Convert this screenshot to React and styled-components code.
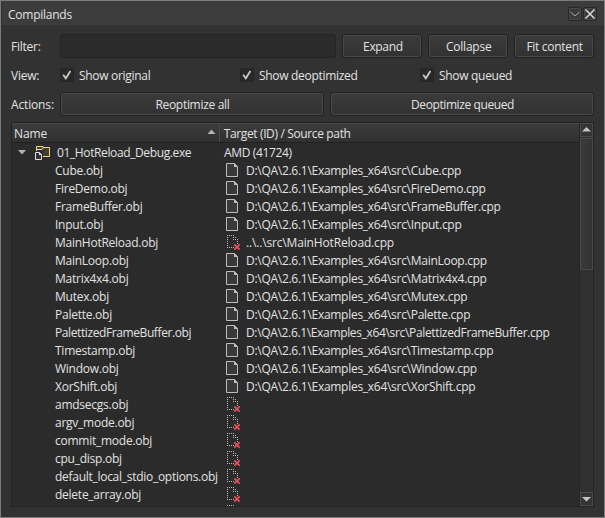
import React from 'react';
import styled, { createGlobalStyle, css } from 'styled-components';

const Global = createGlobalStyle`
  * { box-sizing: border-box; }
  body { margin: 0; background: #323232; }
`;

const Window = styled.div`
  width: 605px;
  height: 518px;
  display: flex;
  flex-direction: column;
  background: #323232;
  border: 1px solid #7b7d7b;
  color: #e2e2e2;
  font: 12px/18px "Open Sans", "Noto Sans", sans-serif;
  white-space: pre;
  overflow: hidden;
  cursor: default;
`;

const TitleBar = styled.header`
  height: 24px;
  margin-left: 1px;
  padding: 1px 7px 0 6px;
  display: flex;
  align-items: center;
  background: #3c3c3c;
`;

const Text = styled.span`
  letter-spacing: ${(p) => p.$ls ?? -0.25}px;
`;

const TitleText = styled(Text)`
  flex: 1;
  padding-top: 2px;
`;

const TitleButton = styled.button`
  width: 14px;
  height: 14px;
  margin-left: 1px;
  padding: 0;
  display: flex;
  border: 1px solid #272727;
  border-radius: 2px;
  background: #3a3a3a;
  box-shadow: inset 0 0 0 1px #484848;
`;

const Form = styled.section`
  display: flex;
  flex-direction: column;
  padding: 9px 10px 0;
`;

const FormRow = styled.div`
  display: flex;
  align-items: center;
  height: ${(p) => p.$h}px;
`;

const Label = styled(Text)`
  width: 49px;
  flex: none;
  padding-top: 2px;
`;

const FilterInput = styled.input`
  width: 277px;
  height: 24px;
  border: 1px solid #242424;
  border-radius: 3px;
  background: #2b2b2b;
  color: inherit;
`;

const Button = styled.button`
  width: ${(p) => p.$w}px;
  height: 24px;
  margin-left: ${(p) => p.$gap ?? 6}px;
  padding: 2px 0 0 1px;
  border: 1px solid #202020;
  border-radius: 3px;
  background: linear-gradient(#3b3b3b, #323232);
  box-shadow: inset 0 0 0 1px #4a4a4a;
  color: inherit;
  font: inherit;
  text-align: center;
`;

const Check = styled.label`
  width: 180px;
  flex: none;
  display: flex;
  align-items: center;
  gap: 5px;
`;

const CheckText = styled(Text)`
  padding-top: 2px;
`;

const CheckBox = styled.span`
  width: 14px;
  height: 14px;
  display: flex;
  background: #292929;
  border: 1px solid #262626;
`;

const Tree = styled.section`
  width: 583px;
  height: 385px;
  margin: 6px 0 0 10px;
  display: flex;
  border: 1px solid #232323;
  background: #2b2b2b;
`;

const Table = styled.div`
  flex: 1;
  display: flex;
  flex-direction: column;
  overflow: hidden;
`;

const HeaderRow = styled.div`
  height: 20px;
  flex: none;
  display: flex;
  background: linear-gradient(#3b3b3b, #303030);
  border-top: 1px solid #464646;
  border-bottom: 1px solid #212121;
`;

const HeaderCell = styled.div`
  width: ${(p) => p.$w}px;
  padding: 1px 3px 0 ${(p) => p.$pad}px;
  display: flex;
  justify-content: space-between;
  ${(p) => p.$rule && css`border-right: 1px solid #4a4a4a;`}
`;

const Rows = styled.div`
  flex: 1;
  padding-top: 1px;
  overflow: hidden;
`;

const Row = styled.div`
  height: 18px;
  display: flex;
`;

const NameCell = styled.div`
  width: 212px;
  flex: none;
  display: flex;
  padding-left: ${(p) => (p.$root ? 0 : 43)}px;
`;

const RootName = styled(Text)`
  padding-left: 7px;
`;

const PathCell = styled.div`
  display: flex;
  gap: 6px;
  padding-left: ${(p) => (p.$root ? 0 : 2)}px;
`;

const ScrollBar = styled.div`
  width: 14px;
  display: flex;
  flex-direction: column;
  background: #303030;
  border-left: 1px solid #252525;
`;

const ScrollButton = styled.div`
  height: 14px;
  display: flex;
  border: 1px solid #4b4b4b;
  background: #343434;
  ${(p) => p.$last && css`margin-top: auto;`}
`;

const ScrollThumb = styled.div`
  height: 132px;
  margin-top: 1px;
  border: 1px solid #4b4b4b;
  background: linear-gradient(90deg, #3a3a3a, #333);
`;

const Svg = styled.svg`
  display: block;
  flex: none;
  overflow: visible;
`;

const CheckMark = () => (
  <Svg width="12" height="12" viewBox="0 0 12 12">
    <path d="M2.2 5.8 L4.8 9.3 L9.4 2" fill="none" stroke="#c8c8c8" strokeWidth="1.8" />
  </Svg>
);

const FileIcon = () => (
  <Svg width="14" height="18" viewBox="0 0 14 18">
    <path d="M.5 1.5H8.5L11.5 4.5V14.5H.5Z" fill="#393939" stroke="#bdbdbd" />
    <path d="M8 1V5H12Z" fill="#bdbdbd" />
  </Svg>
);

const MissingIcon = () => (
  <Svg width="14" height="18" viewBox="0 0 14 18" shapeRendering="crispEdges">
    <path d="M1 1.5H8M1 13.5H8" stroke="#b8b8b8" strokeDasharray="1 1" />
    <path d="M1.5 1V14" stroke="#b8b8b8" strokeDasharray="1 1" />
    <path d="M7 3h1v1h-1zM9 3h1v1h-1zM7 5h1v1h-1zM9 5h1v1h-1zM11 5h1v1h-1zM11 7h1v1h-1zM11 9h1v1h-1z" fill="#b8b8b8" />
    <path d="M8.3 10.3L13.7 15.7M13.7 10.3L8.3 15.7" stroke="#e8505a" strokeWidth="1.8" shapeRendering="auto" />
  </Svg>
);

const ProjectIcon = () => (
  <Svg width="15" height="18" viewBox="0 0 15 18">
    <path d="M1.5 6.5V2.5H7.5V3.5H14.5V12.5H8V5.5H1.5" fill="#403d33" stroke="none" />
    <path d="M1.5 7V2.5H8V3.5H14.5V12.5H8M1.5 5.5H7L8.5 3.5" fill="none" stroke="#f2d58c" />
    <path d="M.5 8.5H4.5L6.5 10.5V15.5H.5Z" fill="#333" stroke="#dedede" />
    <path d="M4 8V11H7Z" fill="#dedede" />
  </Svg>
);

const Expander = () => (
  <Svg width="23" height="18" viewBox="0 0 23 18">
    <path d="M6 6H14L10 10.5Z" fill="#b4b4b4" />
  </Svg>
);

const SortArrow = () => (
  <Svg width="9" height="18" viewBox="0 0 9 18">
    <path d="M.5 9H8.5L4.5 4.5Z" fill="#b4b4b4" />
  </Svg>
);

const ScrollArrow = ({ down }) => (
  <Svg width="11" height="12" viewBox="0 0 11 12">
    <path d={down ? 'M1 4H10L5.5 8.5Z' : 'M1 7.5H10L5.5 3Z'} fill="#c4c4c4" />
  </Svg>
);

const columns = [
  { title: 'Name', w: 208, pad: 2, ls: -0.1 },
  { title: 'Target (ID) / Source path', w: 360, pad: 4, ls: -0.36 },
];

const src = (f) => `D:\\QA\\2.6.1\\Examples_x64\\src\\${f}.cpp`;
const rows = [
  ['Cube', src('Cube')],
  ['FireDemo', src('FireDemo')],
  ['FrameBuffer', src('FrameBuffer')],
  ['Input', src('Input')],
  ['MainHotReload', '..\\..\\src\\MainHotReload.cpp', true],
  ['MainLoop', src('MainLoop')],
  ['Matrix4x4', src('Matrix4x4')],
  ['Mutex', src('Mutex')],
  ['Palette', src('Palette')],
  ['PalettizedFrameBuffer', src('PalettizedFrameBuffer')],
  ['Timestamp', src('Timestamp')],
  ['Window', src('Window')],
  ['XorShift', src('XorShift')],
  ['amdsecgs', '', true],
  ['argv_mode', '', true],
  ['commit_mode', '', true],
  ['cpu_disp', '', true],
  ['default_local_stdio_options', '', true],
  ['delete_array', '', true],
];

// Tracking for the labels that would otherwise run wide or narrow.
const nameTracking = { PalettizedFrameBuffer: -0.4, default_local_stdio_options: -0.28 };
const pathTracking = { PalettizedFrameBuffer: -0.34, MainHotReload: -0.16 };

export default function App() {
  return (
    <>
      <Global />
      <Window>
        <TitleBar>
          <TitleText>Compilands</TitleText>
          <TitleButton>
            <Svg width="12" height="12" viewBox="0 0 12 12">
              <path d="M1.5 4L6 8L10.5 4" fill="none" stroke="#a8a8a8" />
            </Svg>
          </TitleButton>
          <TitleButton>
            <Svg width="12" height="12" viewBox="0 0 12 12">
              <path d="M1.5 1.5L10.5 10.5M10.5 1.5L1.5 10.5" stroke="#d8d8d8" strokeWidth="1.5" />
            </Svg>
          </TitleButton>
        </TitleBar>
        <Form>
          <FormRow $h={24}>
            <Label>Filter:</Label>
            <FilterInput />
            <Button $w={80}><Text $ls={-0.35}>Expand</Text></Button>
            <Button $w={80}><Text>Collapse</Text></Button>
            <Button $w={80}><Text $ls={-0.3}>Fit content</Text></Button>
          </FormRow>
          <FormRow $h={34}>
            <Label>View:</Label>
            {['Show original', 'Show deoptimized', 'Show queued'].map((t) => (
              <Check key={t}>
                <CheckBox><CheckMark /></CheckBox>
                <CheckText $ls={-0.3}>{t}</CheckText>
              </Check>
            ))}
          </FormRow>
          <FormRow $h={24}>
            <Label $ls={-0.15}>Actions:</Label>
            <Button $w={264} $gap={0}><Text $ls={-0.3}>Reoptimize all</Text></Button>
            <Button $w={264}><Text $ls={-0.4}>Deoptimize queued</Text></Button>
          </FormRow>
        </Form>
        <Tree>
          <Table>
            <HeaderRow>
              {columns.map((c, i) => (
                <HeaderCell key={c.title} $w={c.w} $pad={c.pad} $rule={i === 0}>
                  <Text $ls={c.ls}>{c.title}</Text>
                  {i === 0 && <SortArrow />}
                </HeaderCell>
              ))}
            </HeaderRow>
            <Rows>
              <Row>
                <NameCell $root>
                  <Expander />
                  <ProjectIcon />
                  <RootName $ls={-0.38}>01_HotReload_Debug.exe</RootName>
                </NameCell>
                <PathCell $root><Text $ls={-0.35}>AMD (41724)</Text></PathCell>
              </Row>
              {rows.map(([name, path, missing]) => (
                <Row key={name}>
                  <NameCell><Text $ls={nameTracking[name]}>{name}.obj</Text></NameCell>
                  <PathCell>
                    {missing ? <MissingIcon /> : <FileIcon />}
                    <Text $ls={pathTracking[name] ?? -0.28}>{path}</Text>
                  </PathCell>
                </Row>
              ))}
              <Row>
                <NameCell />
                <PathCell><MissingIcon /></PathCell>
              </Row>
            </Rows>
          </Table>
          <ScrollBar>
            <ScrollButton><ScrollArrow /></ScrollButton>
            <ScrollThumb />
            <ScrollButton $last><ScrollArrow down /></ScrollButton>
          </ScrollBar>
        </Tree>
      </Window>
    </>
  );
}
